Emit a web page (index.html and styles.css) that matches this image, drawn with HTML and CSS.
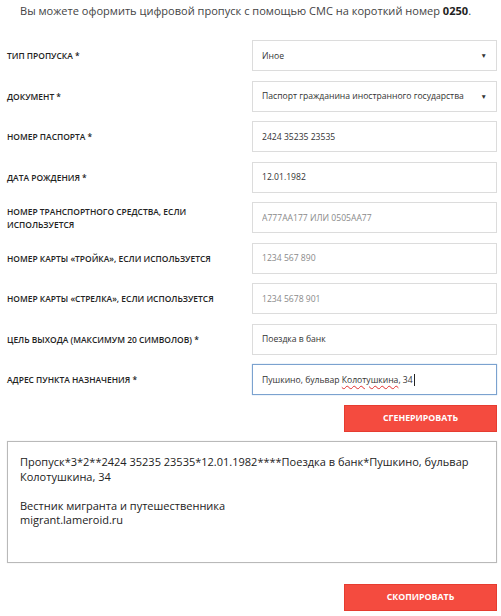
FILE: index.html
```html
<!DOCTYPE html>
<html lang="ru">
<head>
<meta charset="utf-8">
<title>Цифровой пропуск</title>
<link rel="stylesheet" href="styles.css">
</head>
<body>
<div class="page">
  <p class="intro">Вы можете оформить цифровой пропуск с помощью СМС на короткий номер <b>0250</b>.</p>
  <form class="form">
    <div class="row">
      <label class="label">Тип пропуска *</label>
      <div class="select"><span class="value">Иное</span><span class="arrow">▼</span></div>
    </div>
    <div class="row">
      <label class="label">Документ *</label>
      <div class="select"><span class="value">Паспорт гражданина иностранного государства</span><span class="arrow">▼</span></div>
    </div>
    <div class="row">
      <label class="label">Номер паспорта *</label>
      <input class="input" type="text" value="2424 35235 23535">
    </div>
    <div class="row">
      <label class="label">Дата рождения *</label>
      <input class="input" type="text" value="12.01.1982">
    </div>
    <div class="row">
      <label class="label">Номер транспортного средства, если используется</label>
      <input class="input" type="text" placeholder="А777АА177 ИЛИ 0505АА77">
    </div>
    <div class="row">
      <label class="label">Номер карты «Тройка», если используется</label>
      <input class="input" type="text" placeholder="1234 567 890">
    </div>
    <div class="row">
      <label class="label">Номер карты «Стрелка», если используется</label>
      <input class="input" type="text" placeholder="1234 5678 901">
    </div>
    <div class="row">
      <label class="label">Цель выхода (максимум 20 символов) *</label>
      <input class="input" type="text" value="Поездка в банк">
    </div>
    <div class="row">
      <label class="label">Адрес пункта назначения *</label>
      <div class="input focused">Пушкино, бульвар <span class="misspelled">Колотушкина</span>, 34<span class="caret"></span></div>
    </div>
    <div class="actions">
      <button type="button" class="btn">Сгенерировать</button>
    </div>
    <div class="result">Пропуск*3*2**2424 35235 23535*12.01.1982****Поездка в банк*Пушкино, бульвар Колотушкина, 34<br><br>Вестник мигранта и путешественника<br>migrant.lameroid.ru</div>
    <div class="actions copy">
      <button type="button" class="btn">Скопировать</button>
    </div>
  </form>
</div>
</body>
</html>
```

FILE: styles.css
```css
* { box-sizing: border-box; }
html, body { margin: 0; padding: 0; background: #fff; }
body {
  font-family: "Open Sans", "Noto Sans", sans-serif;
  color: #333;
}
.page {
  width: 501px;
  padding: 0 4px 0 7px;
}
.intro {
  margin: 0;
  padding: 3px 0 0 13px;
  font-size: 11.05px;
  line-height: 16px;
  color: #444;
}
.intro b { font-weight: 700; color: #222; }
.form {
  margin-top: 21px;
  display: flex;
  flex-direction: column;
  gap: 9.5px;
}
.row {
  display: grid;
  grid-template-columns: 245px 245px;
  align-items: center;
  height: 31px;
}
.label {
  font-size: 8.45px;
  font-weight: 600;
  text-transform: uppercase;
  color: #222;
  line-height: 13px;
  padding-right: 20px;
}
.input, .select {
  height: 31px;
  border: 1px solid #dcdcdc;
  background: #fff;
  font-family: "Open Sans", "Noto Sans", sans-serif;
  font-size: 8.6px;
  color: #333;
  padding: 0 9px;
  outline: none;
  display: flex;
  align-items: center;
  width: 245px;
}
.input::placeholder { color: #8a8a8a; opacity: 1; }
.select { justify-content: space-between; }
.select .arrow { font-size: 6.5px; color: #333; }
.focused {
  border-color: #7ba2cf;
  box-shadow: 0 0 1px #9bbbe0;
  white-space: pre;
}
.misspelled {
  text-decoration: underline wavy #e03030;
  text-decoration-thickness: 1px;
  text-underline-offset: 2px;
}
.caret {
  display: inline-block;
  width: 1px;
  height: 12px;
  background: #222;
  margin-left: 1px;
}
.actions {
  display: flex;
  justify-content: flex-end;
}
.actions.copy { margin-top: 11px; }
.btn {
  width: 153px;
  height: 27px;
  border: 1px solid #e63c30;
  background: #f44b3f;
  color: #fff;
  font-family: "Open Sans", "Noto Sans", sans-serif;
  font-size: 8.8px;
  font-weight: 700;
  text-transform: uppercase;
  cursor: pointer;
  padding: 0;
}
.result {
  height: 122px;
  border: 1px solid #b9b9b9;
  box-shadow: 0 0 1px #ddd;
  padding: 13px 12px 0 12px;
  font-size: 11px;
  line-height: 14.5px;
  color: #222;
}
```
